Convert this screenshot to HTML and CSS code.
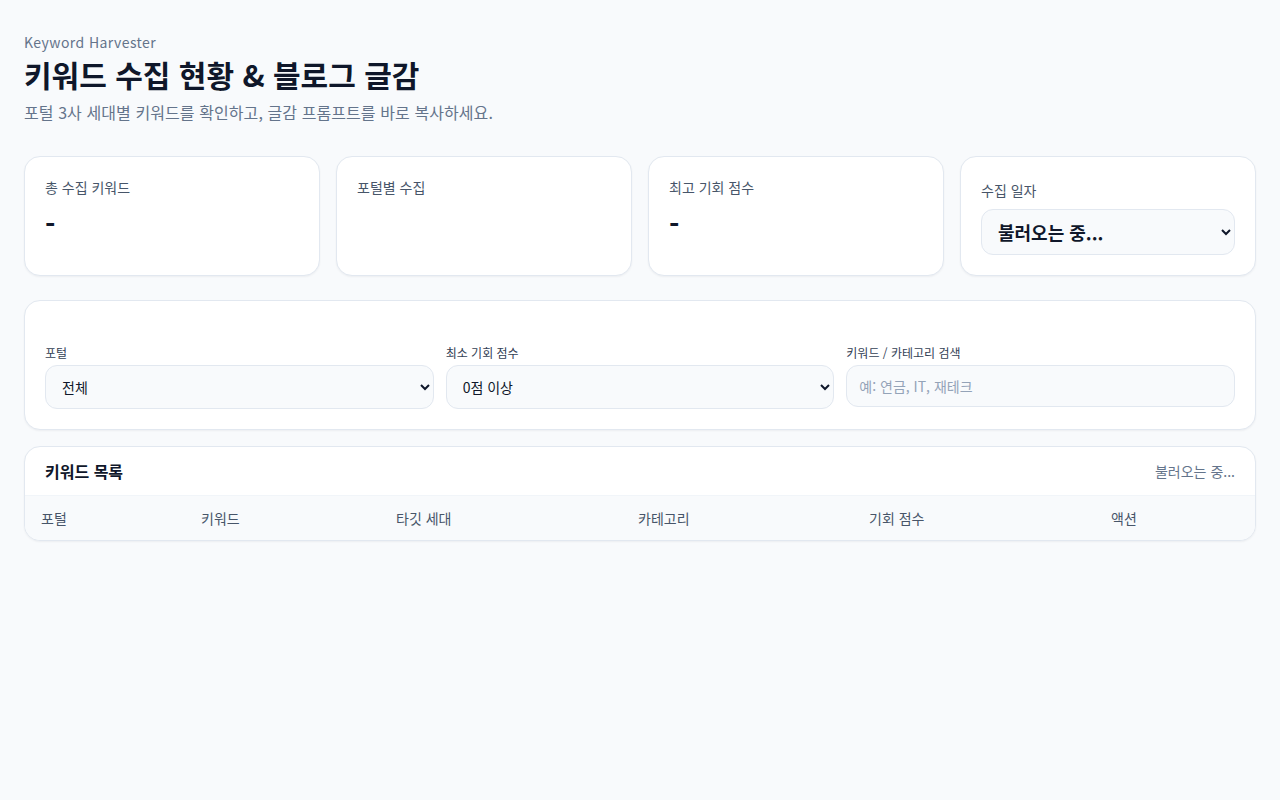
FILE: index.html
```html
<!DOCTYPE html>
<html lang="ko">
<head>
    <meta charset="UTF-8">
    <meta name="viewport" content="width=device-width, initial-scale=1.0">
    <title>Keyword Harvester</title>
    <link rel="stylesheet" href="styles.css">
</head>
<body>
    <main class="page">
        <header class="page-header">
            <p class="eyebrow">Keyword Harvester</p>
            <h1>키워드 수집 현황 &amp; 블로그 글감</h1>
            <p class="lead">포털 3사 세대별 키워드를 확인하고, 글감 프롬프트를 바로 복사하세요.</p>
        </header>

        <section class="stats">
            <div class="stat-card">
                <span class="stat-label">총 수집 키워드</span>
                <strong class="stat-value" id="totalCount">-</strong>
            </div>
            <div class="stat-card">
                <span class="stat-label">포털별 수집</span>
                <div class="stat-portals" id="portalCounts"></div>
            </div>
            <div class="stat-card">
                <span class="stat-label">최고 기회 점수</span>
                <strong class="stat-value" id="topScore">-</strong>
            </div>
            <div class="stat-card date-card">
                <label class="stat-label" for="dateSelect">수집 일자</label>
                <select id="dateSelect" class="date-select">
                    <option>불러오는 중...</option>
                </select>
            </div>
        </section>

        <section class="card filters">
            <div class="field">
                <label for="portalFilter">포털</label>
                <select id="portalFilter">
                    <option>전체</option>
                    <option>네이버</option>
                    <option>다음</option>
                    <option>구글</option>
                </select>
            </div>
            <div class="field">
                <label for="scoreFilter">최소 기회 점수</label>
                <select id="scoreFilter">
                    <option>0점 이상</option>
                    <option>50점 이상</option>
                    <option>70점 이상</option>
                </select>
            </div>
            <div class="field">
                <label for="searchInput">키워드 / 카테고리 검색</label>
                <input id="searchInput" type="text" placeholder="예: 연금, IT, 재테크">
            </div>
        </section>

        <section class="card table-card">
            <div class="table-head">
                <h2>키워드 목록</h2>
                <span class="table-status" id="tableStatus">불러오는 중...</span>
            </div>
            <table class="keyword-table">
                <thead>
                    <tr>
                        <th class="col-portal">포털</th>
                        <th class="col-keyword">키워드</th>
                        <th class="col-target">타깃 세대</th>
                        <th class="col-category">카테고리</th>
                        <th class="col-score">기회 점수</th>
                        <th>액션</th>
                    </tr>
                </thead>
                <tbody id="keywordRows"></tbody>
            </table>
        </section>
    </main>
</body>
</html>
```

FILE: styles.css
```css
* {
    box-sizing: border-box;
}

body {
    font-family: "Noto Sans CJK KR", "Noto Sans", sans-serif;
    background: #f8fafc;
    color: #0f172a;
    margin: 0;
    min-height: 100vh;
}

.page {
    padding: 32px 24px 40px;
}

/* Header */
.page-header {
    margin-bottom: 32px;
}

.eyebrow {
    margin: 0;
    font-size: 14px;
    line-height: 20px;
    letter-spacing: 0.03em;
    color: #64748b;
}

.page-header h1 {
    margin: 2px 0 6px;
    font-size: 30px;
    line-height: 40px;
    font-weight: 700;
    color: #0f172a;
}

.lead {
    margin: 0;
    font-size: 16px;
    line-height: 24px;
    letter-spacing: 0.005em;
    color: #64748b;
}

/* Stat cards */
.stats {
    display: grid;
    grid-template-columns: repeat(4, 1fr);
    gap: 16px;
    margin-bottom: 24px;
}

.stat-card,
.card {
    background: #fff;
    border: 1px solid #e2e8f0;
    border-radius: 16px;
    box-shadow: 0 1px 2px rgba(15, 23, 42, 0.05);
}

.stat-card {
    display: flex;
    flex-direction: column;
    padding: 20px;
}

.stat-label {
    font-size: 14px;
    line-height: 20px;
    color: #475569;
}

.stat-value {
    margin-top: 8px;
    font-size: 28px;
    line-height: 36px;
    font-weight: 700;
    color: #0f172a;
}

.date-card .stat-label {
    margin-top: 3px;
    margin-bottom: 9px;
}

.date-select {
    height: 46px;
    padding: 0 12px;
    font-family: inherit;
    font-size: 18px;
    font-weight: 700;
    color: #0f172a;
    background: #f8fafc;
    border: 1px solid #e2e8f0;
    border-radius: 12px;
}

/* Filters */
.filters {
    display: grid;
    grid-template-columns: repeat(3, 1fr);
    gap: 12px;
    padding: 44px 20px 20px;
    margin-bottom: 16px;
}

.field {
    display: flex;
    flex-direction: column;
    justify-content: flex-end;
}

.field label {
    font-size: 12px;
    line-height: 16px;
    color: #334155;
    margin-bottom: 4px;
}

.field select,
.field input {
    height: 44px;
    padding: 0 12px;
    font-family: inherit;
    font-size: 14px;
    color: #0f172a;
    background: #f8fafc;
    border: 1px solid #e2e8f0;
    border-radius: 12px;
}

.field input {
    height: 42px;
    margin-bottom: 2px;
    outline: none;
}

.field input::placeholder {
    color: #94a3b8;
}

/* Keyword table */
.table-card {
    overflow: hidden;
}

.table-head {
    display: flex;
    align-items: center;
    justify-content: space-between;
    height: 49px;
    padding: 0 20px;
    border-bottom: 1px solid #f1f5f9;
}

.table-head h2 {
    margin: 0;
    font-size: 16px;
    font-weight: 700;
    color: #0f172a;
}

.table-status {
    font-size: 14px;
    color: #64748b;
}

.keyword-table {
    width: 100%;
    border-collapse: collapse;
}

.keyword-table th {
    height: 44px;
    padding: 0 16px;
    text-align: left;
    font-size: 14px;
    font-weight: 400;
    color: #475569;
    background: #f8fafc;
}

.col-portal { width: 160px; }
.col-keyword { width: 195px; }
.col-target { width: 242px; }
.col-category { width: 231px; }
.col-score { width: 242px; }
```
